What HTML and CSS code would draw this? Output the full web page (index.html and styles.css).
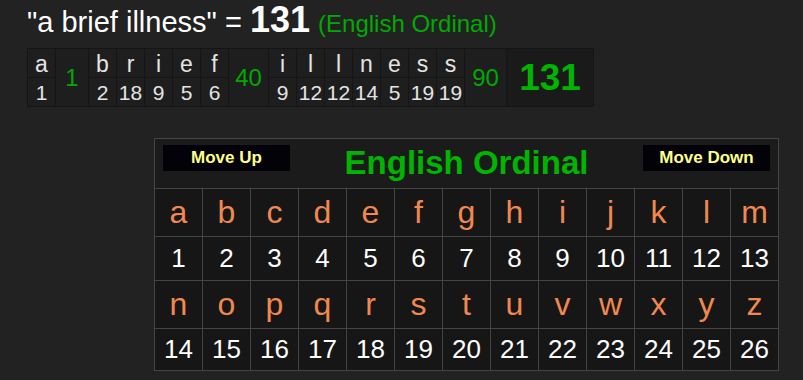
FILE: index.html
```html
<!DOCTYPE html>
<html>
<head>
<meta charset="utf-8">
<link rel="stylesheet" href="styles.css">
</head>
<body>
<div class="page">
  <div class="title">"a brief illness" = <span class="title-num">131</span> <span class="title-cipher">(English Ordinal)</span></div>
  <table class="bd">
    <tr>
      <td class="l">a</td>
      <td class="sum w1" rowspan="2">1</td>
      <td class="l">b</td><td class="l">r</td><td class="l">i</td><td class="l">e</td><td class="l">f</td>
      <td class="sum w40" rowspan="2">40</td>
      <td class="l">i</td><td class="l">l</td><td class="l">l</td><td class="l">n</td><td class="l">e</td><td class="l">s</td><td class="l">s</td>
      <td class="sum w90" rowspan="2">90</td>
      <td class="total" rowspan="2">131</td>
    </tr>
    <tr>
      <td class="n">1</td>
      <td class="n">2</td><td class="n">18</td><td class="n">9</td><td class="n">5</td><td class="n">6</td>
      <td class="n">9</td><td class="n">12</td><td class="n">12</td><td class="n">14</td><td class="n">5</td><td class="n">19</td><td class="n">19</td>
    </tr>
  </table>

  <div class="panel">
    <div class="head">
      <div class="btn">Move Up</div>
      <div class="cipher">English Ordinal</div>
      <div class="btn">Move Down</div>
    </div>
    <div class="grid">
      <div class="gl">a</div><div class="gl">b</div><div class="gl">c</div><div class="gl">d</div><div class="gl">e</div><div class="gl">f</div><div class="gl">g</div><div class="gl">h</div><div class="gl">i</div><div class="gl">j</div><div class="gl">k</div><div class="gl">l</div><div class="gl">m</div>
      <div class="gn">1</div><div class="gn">2</div><div class="gn">3</div><div class="gn">4</div><div class="gn">5</div><div class="gn">6</div><div class="gn">7</div><div class="gn">8</div><div class="gn">9</div><div class="gn">10</div><div class="gn">11</div><div class="gn">12</div><div class="gn">13</div>
      <div class="gl">n</div><div class="gl">o</div><div class="gl">p</div><div class="gl">q</div><div class="gl">r</div><div class="gl">s</div><div class="gl">t</div><div class="gl">u</div><div class="gl">v</div><div class="gl">w</div><div class="gl">x</div><div class="gl">y</div><div class="gl">z</div>
      <div class="gn">14</div><div class="gn">15</div><div class="gn">16</div><div class="gn">17</div><div class="gn">18</div><div class="gn">19</div><div class="gn">20</div><div class="gn">21</div><div class="gn">22</div><div class="gn">23</div><div class="gn">24</div><div class="gn">25</div><div class="gn">26</div>
    </div>
  </div>
</div>
</body>
</html>
```

FILE: styles.css
```css
html, body {
  margin: 0;
  padding: 0;
  background: #222222;
  font-family: "Liberation Sans", Arial, sans-serif;
}

.page {
  padding: 5px 0 0 27px;
}

.title {
  height: 34px;
  font-size: 29px;
  line-height: 30px;
  color: #ffffff;
  white-space: nowrap;
}

.title-num {
  font-size: 36px;
  line-height: 30px;
  font-weight: bold;
}

.title-cipher {
  font-size: 24px;
  line-height: 30px;
  color: #00aa00;
}

.bd {
  margin-top: 9px;
  border-collapse: separate;
  border-spacing: 1px;
  background: #151515;
}

.bd td {
  padding: 0;
  text-align: center;
  background: #1e1e1e;
  color: #e4e4e4;
}

.bd .l {
  width: 27px;
  height: 26px;
  padding-top: 2px;
  font-size: 23px;
  line-height: 26px;
  vertical-align: top;
}

.bd .n {
  width: 27px;
  height: 27px;
  padding-top: 1px;
  font-size: 21px;
  line-height: 27px;
  vertical-align: top;
}

.bd .sum {
  font-size: 24px;
  line-height: 28px;
  color: #00a800;
  vertical-align: middle;
}

.bd .w1 { width: 32px; }
.bd .w40 { width: 39px; }
.bd .w90 { width: 41px; }

.bd .total {
  width: 86px;
  font-size: 37px;
  line-height: 40px;
  font-weight: bold;
  color: #00b400;
  background: #1a1a1a;
  vertical-align: middle;
}

.panel {
  margin: 31px 0 0 127px;
  width: 623px;
  border: 1px solid #454545;
  background: #1b1b1b;
}

.head {
  padding: 6px 8px 0 8px;
  box-sizing: border-box;
  height: 50px;
  display: flex;
  justify-content: space-between;
  align-items: flex-start;
  border-bottom: 1px solid #454545;
}

.btn {
  width: 127px;
  height: 26px;
  line-height: 26px;
  background: #020208;
  color: #ffff88;
  font-size: 17px;
  font-weight: bold;
  text-align: center;
}

.cipher {
  font-size: 33px;
  line-height: 36px;
  font-weight: bold;
  color: #00b400;
}

.grid {
  display: grid;
  grid-template-columns: repeat(13, 47px);
  grid-template-rows: 47px 43px 47px 41px;
  gap: 1px;
  background: #454545;
}

.gl, .gn {
  background: #161616;
  display: flex;
  align-items: center;
  justify-content: center;
}

.gl {
  font-size: 32px;
  color: #f08850;
}

.gn {
  font-size: 26px;
  color: #ffffff;
}
```
